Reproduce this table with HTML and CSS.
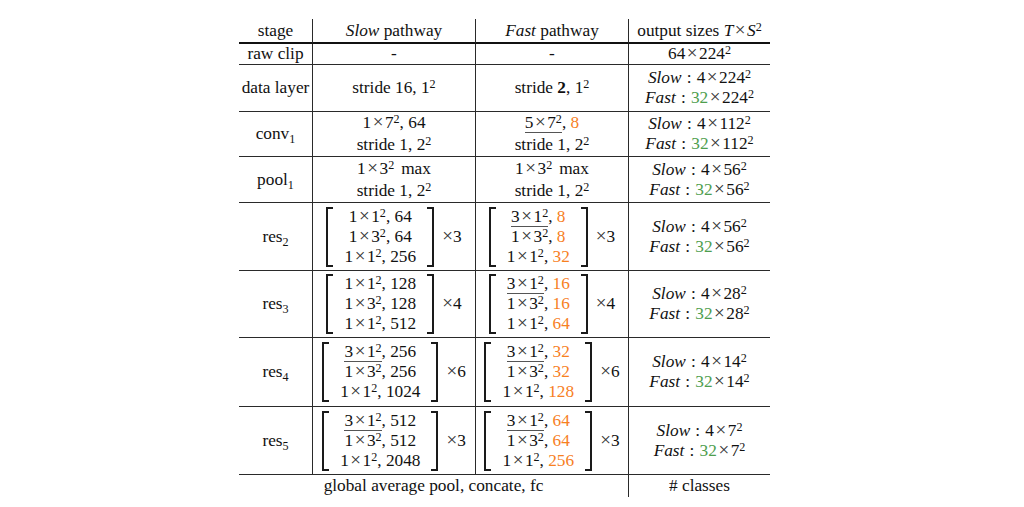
FILE: index.html
```html
<!DOCTYPE html>
<html lang="en">
<head>
<meta charset="utf-8">
<title>SlowFast architecture</title>
<link rel="stylesheet" href="styles.css">
</head>
<body>
<table class="arch">
  <colgroup>
    <col class="c-stage">
    <col class="c-slow">
    <col class="c-fast">
    <col class="c-out">
  </colgroup>
  <thead>
    <tr class="r-head">
      <th>stage</th>
      <th><i>Slow</i> pathway</th>
      <th><i>Fast</i> pathway</th>
      <th>output sizes <i class="m">T</i><span class="x">×</span><i class="m">S</i><sup>2</sup></th>
    </tr>
  </thead>
  <tbody>
    <tr class="r-raw">
      <td>raw clip</td>
      <td>-</td>
      <td>-</td>
      <td>64<span class="x">×</span>224<sup>2</sup></td>
    </tr>
    <tr class="r-data">
      <td>data layer</td>
      <td>stride 16, 1<sup>2</sup></td>
      <td>stride <b>2</b>, 1<sup>2</sup></td>
      <td class="out">
        <div><i>Slow</i><span class="colon">:</span>4<span class="x">×</span>224<sup>2</sup></div>
        <div><i>Fast</i><span class="colon">:</span><span class="g">32</span><span class="x">×</span>224<sup>2</sup></div>
      </td>
    </tr>
    <tr class="r-conv">
      <td>conv<sub>1</sub></td>
      <td class="two">
        <div>1<span class="x">×</span>7<sup>2</sup>, 64</div>
        <div>stride 1, 2<sup>2</sup></div>
      </td>
      <td class="two">
        <div><span class="ul">5<span class="x">×</span>7<sup>2</sup></span>, <span class="o">8</span></div>
        <div>stride 1, 2<sup>2</sup></div>
      </td>
      <td class="out">
        <div><i>Slow</i><span class="colon">:</span>4<span class="x">×</span>112<sup>2</sup></div>
        <div><i>Fast</i><span class="colon">:</span><span class="g">32</span><span class="x">×</span>112<sup>2</sup></div>
      </td>
    </tr>
    <tr class="r-pool">
      <td>pool<sub>1</sub></td>
      <td class="two">
        <div>1<span class="x">×</span>3<sup>2</sup><span class="sp">max</span></div>
        <div>stride 1, 2<sup>2</sup></div>
      </td>
      <td class="two">
        <div>1<span class="x">×</span>3<sup>2</sup><span class="sp">max</span></div>
        <div>stride 1, 2<sup>2</sup></div>
      </td>
      <td class="out">
        <div><i>Slow</i><span class="colon">:</span>4<span class="x">×</span>56<sup>2</sup></div>
        <div><i>Fast</i><span class="colon">:</span><span class="g">32</span><span class="x">×</span>56<sup>2</sup></div>
      </td>
    </tr>
    <tr class="r-res2">
      <td>res<sub>2</sub></td>
      <td>
        <div class="blk">
          <span class="br l"></span>
          <div class="rows">
            <div>1<span class="x">×</span>1<sup>2</sup>, 64</div>
            <div>1<span class="x">×</span>3<sup>2</sup>, 64</div>
            <div>1<span class="x">×</span>1<sup>2</sup>, 256</div>
          </div>
          <span class="br r"></span>
          <span class="mult"><span class="x">×</span>3</span>
        </div>
      </td>
      <td>
        <div class="blk">
          <span class="br l"></span>
          <div class="rows">
            <div><span class="ul">3<span class="x">×</span>1<sup>2</sup></span>, <span class="o">8</span></div>
            <div>1<span class="x">×</span>3<sup>2</sup>, <span class="o">8</span></div>
            <div>1<span class="x">×</span>1<sup>2</sup>, <span class="o">32</span></div>
          </div>
          <span class="br r"></span>
          <span class="mult"><span class="x">×</span>3</span>
        </div>
      </td>
      <td class="out">
        <div><i>Slow</i><span class="colon">:</span>4<span class="x">×</span>56<sup>2</sup></div>
        <div><i>Fast</i><span class="colon">:</span><span class="g">32</span><span class="x">×</span>56<sup>2</sup></div>
      </td>
    </tr>
    <tr class="r-res3">
      <td>res<sub>3</sub></td>
      <td>
        <div class="blk">
          <span class="br l"></span>
          <div class="rows">
            <div>1<span class="x">×</span>1<sup>2</sup>, 128</div>
            <div>1<span class="x">×</span>3<sup>2</sup>, 128</div>
            <div>1<span class="x">×</span>1<sup>2</sup>, 512</div>
          </div>
          <span class="br r"></span>
          <span class="mult"><span class="x">×</span>4</span>
        </div>
      </td>
      <td>
        <div class="blk">
          <span class="br l"></span>
          <div class="rows">
            <div><span class="ul">3<span class="x">×</span>1<sup>2</sup></span>, <span class="o">16</span></div>
            <div>1<span class="x">×</span>3<sup>2</sup>, <span class="o">16</span></div>
            <div>1<span class="x">×</span>1<sup>2</sup>, <span class="o">64</span></div>
          </div>
          <span class="br r"></span>
          <span class="mult"><span class="x">×</span>4</span>
        </div>
      </td>
      <td class="out">
        <div><i>Slow</i><span class="colon">:</span>4<span class="x">×</span>28<sup>2</sup></div>
        <div><i>Fast</i><span class="colon">:</span><span class="g">32</span><span class="x">×</span>28<sup>2</sup></div>
      </td>
    </tr>
    <tr class="r-res4">
      <td>res<sub>4</sub></td>
      <td>
        <div class="blk">
          <span class="br l"></span>
          <div class="rows">
            <div><span class="ul">3<span class="x">×</span>1<sup>2</sup></span>, 256</div>
            <div>1<span class="x">×</span>3<sup>2</sup>, 256</div>
            <div>1<span class="x">×</span>1<sup>2</sup>, 1024</div>
          </div>
          <span class="br r"></span>
          <span class="mult"><span class="x">×</span>6</span>
        </div>
      </td>
      <td>
        <div class="blk">
          <span class="br l"></span>
          <div class="rows">
            <div><span class="ul">3<span class="x">×</span>1<sup>2</sup></span>, <span class="o">32</span></div>
            <div>1<span class="x">×</span>3<sup>2</sup>, <span class="o">32</span></div>
            <div>1<span class="x">×</span>1<sup>2</sup>, <span class="o">128</span></div>
          </div>
          <span class="br r"></span>
          <span class="mult"><span class="x">×</span>6</span>
        </div>
      </td>
      <td class="out">
        <div><i>Slow</i><span class="colon">:</span>4<span class="x">×</span>14<sup>2</sup></div>
        <div><i>Fast</i><span class="colon">:</span><span class="g">32</span><span class="x">×</span>14<sup>2</sup></div>
      </td>
    </tr>
    <tr class="r-res5">
      <td>res<sub>5</sub></td>
      <td>
        <div class="blk">
          <span class="br l"></span>
          <div class="rows">
            <div><span class="ul">3<span class="x">×</span>1<sup>2</sup></span>, 512</div>
            <div>1<span class="x">×</span>3<sup>2</sup>, 512</div>
            <div>1<span class="x">×</span>1<sup>2</sup>, 2048</div>
          </div>
          <span class="br r"></span>
          <span class="mult"><span class="x">×</span>3</span>
        </div>
      </td>
      <td>
        <div class="blk">
          <span class="br l"></span>
          <div class="rows">
            <div><span class="ul">3<span class="x">×</span>1<sup>2</sup></span>, <span class="o">64</span></div>
            <div>1<span class="x">×</span>3<sup>2</sup>, <span class="o">64</span></div>
            <div>1<span class="x">×</span>1<sup>2</sup>, <span class="o">256</span></div>
          </div>
          <span class="br r"></span>
          <span class="mult"><span class="x">×</span>3</span>
        </div>
      </td>
      <td class="out">
        <div><i>Slow</i><span class="colon">:</span>4<span class="x">×</span>7<sup>2</sup></div>
        <div><i>Fast</i><span class="colon">:</span><span class="g">32</span><span class="x">×</span>7<sup>2</sup></div>
      </td>
    </tr>
    <tr class="r-foot">
      <td colspan="3">global average pool, concate, fc</td>
      <td># classes</td>
    </tr>
  </tbody>
</table>
</body>
</html>
```

FILE: styles.css
```css
html, body {
  margin: 0;
  padding: 0;
  background: #ffffff;
}

body {
  padding: 19px 0 0 239px;
  font-family: "Liberation Serif", "Times New Roman", serif;
  font-size: 17.3px;
  color: #111111;
}

.arch {
  border-collapse: separate;
  border-spacing: 0;
  table-layout: fixed;
  width: 531px;
  line-height: 20px;
}

.c-stage { width: 74px; }
.c-slow { width: 163px; }
.c-fast { width: 153px; }
.c-out { width: 141px; }

.arch th,
.arch td {
  padding: 0;
  text-align: center;
  vertical-align: middle;
  white-space: nowrap;
  font-weight: normal;
  border-bottom: 1px solid #2a2a2a;
  border-right: 1px solid #2a2a2a;
}

.arch th:last-child,
.arch td:last-child {
  border-right: none;
}

.arch thead th {
  border-bottom: 2px solid #111111;
}

.r-head { height: 25px; }
.r-raw { height: 21px; }
.r-data { height: 47px; }
.r-conv { height: 45px; }
.r-pool { height: 46px; }
.r-res2 { height: 68px; }
.r-res3 { height: 67px; }
.r-res4 { height: 69px; }
.r-res5 { height: 68px; }
.r-foot { height: 22px; }

.r-foot td {
  border-bottom: none;
}

.two { line-height: 22px; }

sup {
  font-size: 0.7em;
  line-height: 0;
  vertical-align: 0.45em;
}

sub {
  font-size: 0.7em;
  line-height: 0;
  vertical-align: -0.35em;
}

.x {
  font-size: 1.1em;
  font-weight: 300;
  line-height: 0;
  margin: 0 0.08em;
  color: #333333;
}

.m {
  font-style: italic;
}

.colon {
  margin: 0 0.3em;
}

.sp {
  margin-left: 0.4em;
}

.o { color: #f7801f; }
.g { color: #4e9e4e; }

.ul {
  border-bottom: 1px solid #555555;
}

.blk {
  display: inline-flex;
  align-items: stretch;
  vertical-align: middle;
}

.rows {
  display: flex;
  flex-direction: column;
  align-items: center;
  padding: 0 11px;
  line-height: 20px;
}

.br {
  width: 5px;
  border-top: 2px solid #1a1a1a;
  border-bottom: 2px solid #1a1a1a;
}

.br.l { border-left: 2px solid #1a1a1a; }
.br.r { border-right: 2px solid #1a1a1a; }

.mult {
  align-self: center;
  margin-left: 8px;
}

.mult .x {
  margin: 0;
}
```
